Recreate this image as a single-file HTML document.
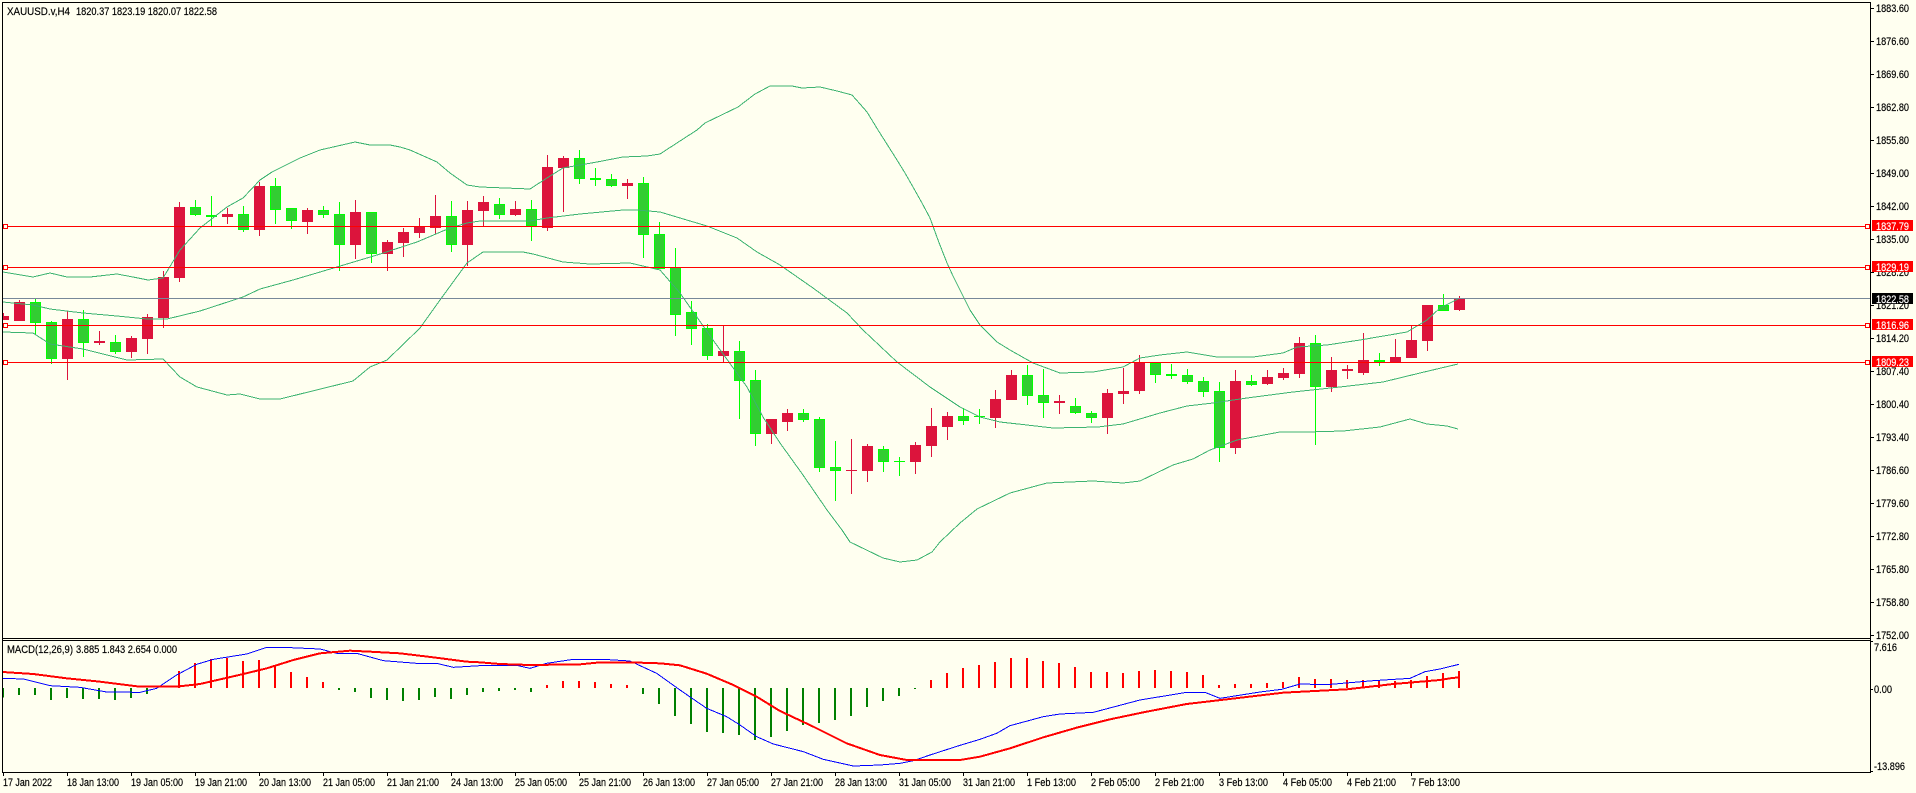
<!DOCTYPE html>
<html><head><meta charset="utf-8"><title>XAUUSD.v,H4</title>
<style>
html,body{margin:0;padding:0;background:#fffff0;width:1916px;height:793px;overflow:hidden}
svg{display:block;position:absolute;left:0;top:0}
text{font-family:"Liberation Sans",sans-serif;font-size:11px;fill:#000;stroke:#000;stroke-width:.18px}
.f text{fill:#fff;stroke:#fff}
.w{fill:none;stroke-width:3}
.b{fill:none;stroke-width:33}
.i{fill:none;stroke-width:27;stroke:#32cd32}
.r{stroke:#dc143c}
.g{stroke:#00ff00}
</style></head><body>
<svg width="1916" height="793" viewBox="0 0 1916 793" xmlns="http://www.w3.org/2000/svg" shape-rendering="crispEdges">
<rect width="1916" height="793" fill="#fffff0"/>

<!-- candles A -->
<g transform="translate(0 150) scale(.3333333)">
<path class="w r" d="M10.5 489V510M58.5 450V513M202.5 483V690M298.5 543V585M394.5 558V624M442.5 492V612M490.5 363V534M538.5 156V396M682.5 174V222M778.5 96V258M922.5 174V252M1066.5 150V327M1162.5 270V363M1210.5 234V321M1258.5 204V264M1306.5 135V252M1402.5 153V348"/>
<path class="b r" d="M10.5 498V510M58.5 456V513M202.5 507V627M298.5 573V579M394.5 564V606M442.5 501V567M490.5 381V504M538.5 171V384M682.5 192V201M778.5 108V240M922.5 180V216M1066.5 186V285M1162.5 276V312M1210.5 246V279M1258.5 228V249M1306.5 198V234M1402.5 180V285"/>
<path class="w g" d="M106.5 447V555M154.5 513V642M250.5 480V621M346.5 555V612M586.5 150V198M634.5 138V228M730.5 168V246M826.5 84V222M874.5 174V237M970.5 168V204M1018.5 156V363M1114.5 186V339M1354.5 153V306"/>
<path class="b g" d="M106.5 456V519M154.5 516V627M250.5 507V579M346.5 576V606M586.5 171V195M634.5 195V201M730.5 192V240M826.5 108V180M874.5 174V213M970.5 180V195M1018.5 192V285M1114.5 186V312M1354.5 198V285"/>
<path class="i" d="M106.5 459V516M154.5 519V624M250.5 510V576M346.5 579V603M586.5 174V192M730.5 195V237M826.5 111V177M874.5 177V210M970.5 183V192M1018.5 195V282M1114.5 189V309M1354.5 201V282"/>
</g>
<!-- candles B -->
<g transform="translate(480 130) scale(.3333333)">
<path class="w r" d="M10.5 198V288M106.5 213V258M202.5 75V303M250.5 78V246M442.5 147V207M730.5 585V696M874.5 867V942M922.5 837V903M1114.5 927V1092M1162.5 942V1056M1306.5 936V1032M1354.5 834V981M1402.5 846V930"/>
<path class="b r" d="M10.5 216V243M106.5 237V255M202.5 111V294M250.5 84V114M442.5 159V168M730.5 663V678M874.5 867V912M922.5 849V876M1114.5 1020V1023M1162.5 948V1023M1306.5 945V996M1354.5 888V948M1402.5 858V891"/>
<path class="w g" d="M58.5 204V267M154.5 210V333M298.5 60V162M346.5 114V168M394.5 132V171M490.5 141V384M538.5 276V417M586.5 354V618M634.5 513V645M682.5 582V690M778.5 633V867M826.5 720V948M970.5 837V876M1018.5 861V1026M1066.5 933V1113M1210.5 948V1026M1258.5 981V1038"/>
<path class="b g" d="M58.5 222V255M154.5 237V288M298.5 84V147M346.5 144V150M394.5 147V168M490.5 159V315M538.5 312V417M586.5 411V555M634.5 546V597M682.5 594V678M778.5 663V753M826.5 750V912M970.5 849V870M1018.5 867V1014M1066.5 1011V1023M1210.5 957V996M1258.5 993V996"/>
<path class="i" d="M58.5 225V252M154.5 240V285M298.5 87V144M394.5 150V165M490.5 162V312M538.5 315V414M586.5 414V552M634.5 549V594M682.5 597V675M778.5 666V750M826.5 753V909M970.5 852V867M1018.5 870V1011M1066.5 1014V1020M1210.5 960V993"/>
</g>
<!-- candles C -->
<g transform="translate(960 270) scale(.3333333)">
<path class="w r" d="M106.5 360V474M154.5 300V390M298.5 375V432M442.5 357V492M490.5 294V402M538.5 255V372M826.5 300V552M922.5 300V345M970.5 294V330M1018.5 201V324M1114.5 261V366M1162.5 285V327M1210.5 189V315M1306.5 207V276M1354.5 165V264M1402.5 105V243M1498.5 78V123"/>
<path class="b r" d="M106.5 387V444M154.5 315V390M298.5 393V399M442.5 369V444M490.5 363V372M538.5 276V363M826.5 333V534M922.5 321V342M970.5 309V324M1018.5 219V312M1114.5 300V351M1162.5 297V303M1210.5 270V309M1306.5 261V276M1354.5 210V264M1402.5 105V213M1498.5 84V120"/>
<path class="w g" d="M10.5 414V465M58.5 417V462M202.5 285V405M250.5 297V444M346.5 384V432M394.5 423V459M586.5 276V339M634.5 282V327M682.5 297V342M730.5 321V381M778.5 336V576M874.5 315V348M1066.5 195V525M1258.5 249V288M1450.5 72V123"/>
<path class="b g" d="M10.5 438V453M58.5 438V441M202.5 315V378M250.5 375V399M346.5 408V429M394.5 429V444M586.5 279V315M634.5 312V318M682.5 315V336M730.5 333V366M778.5 363V534M874.5 333V345M1066.5 219V351M1258.5 270V276M1450.5 105V123"/>
<path class="i" d="M10.5 441V450M202.5 318V375M250.5 378V396M346.5 411V426M394.5 432V441M586.5 282V312M682.5 318V333M730.5 336V363M778.5 366V531M874.5 336V342M1066.5 222V348M1450.5 108V120"/>
</g>

<!-- bollinger -->
<g fill="none" stroke="#3cb371" stroke-width="1">
<polyline points="3,272 33,277 50,273 67,277 90,277 117,274 133,277 148,280 163,278 180,250 200,228 227,207 243,198 260,180 272,172 300,158 320,150 355,142 370,145 390,145 400,147 410,150 437,162 450,173 467,185 480,187 530,189 547,178 563,168 597,162 623,157 647,156 660,154 680,141 697,130 705,123 738,107 755,94 770,86 792,86 802,88 820,87 837,91 852,95 860,104 867,112 878,130 897,160 905,173 913,187 922,203 930,218 938,240 947,263 953,276 960,290 970,310 980,325 997,342 1010,350 1033,363 1060,373 1093,372 1123,367 1140,358 1160,355 1187,352 1217,357 1253,357 1283,353 1297,347 1327,345 1360,340 1407,332 1427,320 1440,308 1458,299"/>
<polyline points="3,302 33,305 50,309 83,313 117,316 147,319 167,319 200,311 243,297 260,289 293,280 337,267 377,255 417,242 450,228 467,223 480,221 530,221 547,218 580,214 623,210 637,210 660,212 680,218 707,226 737,238 757,252 780,265 813,288 847,313 863,330 897,362 930,387 960,407 980,417 1000,422 1027,425 1053,428 1098,427 1123,424 1160,413 1187,406 1213,403 1247,398 1293,392 1340,387 1383,382 1420,373 1458,364"/>
<polyline points="3,332 33,333 50,344 83,349 127,360 163,359 180,377 197,387 227,395 240,394 260,399 280,399 353,381 370,367 387,360 420,328 440,300 467,263 483,252 523,252 533,254 563,262 590,264 630,263 660,270 680,293 713,340 747,387 763,417 780,443 803,475 827,510 842,530 850,542 883,558 900,562 917,560 932,552 940,542 960,523 977,509 1010,493 1047,483 1093,481 1123,483 1140,481 1173,465 1193,459 1210,450 1237,440 1280,432 1307,432 1343,431 1380,427 1410,419 1427,424 1447,426 1458,429"/>
</g>

<!-- horizontal lines -->
<rect x="3" y="298" width="1867" height="1" fill="#778899"/>
<g fill="#ff0000">
<rect x="3" y="226" width="1867" height="1"/>
<rect x="3" y="267" width="1867" height="1"/>
<rect x="3" y="325" width="1867" height="1"/>
<rect x="3" y="362" width="1867" height="1"/>
</g>
<g fill="#fffff0" stroke="#ff0000" stroke-width="1">
<rect x="3.5" y="224.5" width="4" height="4"/><rect x="3.5" y="265.5" width="4" height="4"/><rect x="3.5" y="323.5" width="4" height="4"/><rect x="3.5" y="360.5" width="4" height="4"/>
<rect x="1865.5" y="224.5" width="4" height="4"/><rect x="1865.5" y="265.5" width="4" height="4"/><rect x="1865.5" y="323.5" width="4" height="4"/><rect x="1865.5" y="360.5" width="4" height="4"/>
</g>

<!-- MACD histogram + lines -->
<g fill="none" stroke-width="6">
<g transform="translate(0 630) scale(.3333333)">
<path stroke="#008000" d="M9 174V203M57 174V195M105 174V195M153 174V210M201 174V204M249 174V207M297 174V207M345 174V210M393 174V204M441 174V192M1017 174V180M1065 174V186M1113 174V204M1161 174V210M1209 174V213M1257 174V210M1305 174V201M1353 174V207M1401 174V195"/>
<path stroke="#ff0000" d="M537 174V123M585 174V99M633 174V87M681 174V84M729 174V93M777 174V90M825 174V105M873 174V126M921 174V141M969 174V156"/>
</g>
<g transform="translate(480 630) scale(.3333333)">
<path stroke="#008000" d="M9 174V186M57 174V183M105 174V180M153 174V186M489 174V192M537 174V222M585 174V258M633 174V282M681 174V306M729 174V309M777 174V315M825 174V330M873 174V321M921 174V303M969 174V285M1017 174V279M1065 174V270M1113 174V258M1161 174V231M1209 174V213M1257 174V198M1305 174V177"/>
<path stroke="#ff0000" d="M201 174V165M249 174V153M297 174V153M345 174V156M393 174V162M441 174V165M1353 174V150M1401 174V129"/>
</g>
<g transform="translate(960 630) scale(.3333333)">
<path stroke="#ff0000" d="M9 174V114M57 174V105M105 174V96M153 174V84M201 174V84M249 174V93M297 174V99M345 174V111M393 174V126M441 174V126M489 174V129M537 174V123M585 174V120M633 174V123M681 174V126M729 174V135M777 174V165M825 174V162M873 174V162M921 174V159M969 174V156M1017 174V141M1065 174V147M1113 174V147M1161 174V150M1209 174V150M1257 174V153M1305 174V153M1353 174V150M1401 174V138M1449 174V129M1497 174V123"/>
</g>
</g>
<g fill="none" stroke="#0000ff" stroke-width="3">
<polyline transform="translate(0 630) scale(.3333333)" points="8,145 70,147 150,167 240,172 320,186 420,187 470,175 530,135 590,103 640,88 740,72 800,52 850,52 960,57 1010,70 1070,70 1150,92 1250,100 1310,100 1360,112 1440,107"/>
<polyline transform="translate(480 630) scale(.3333333)" points="0,107 110,106 150,115 200,100 280,88 370,88 450,93 530,130 600,180 680,235 740,260 780,285 830,320 880,342 970,365 1030,388 1120,408 1200,405 1260,400 1300,392 1350,375 1440,346"/>
<polyline transform="translate(960 630) scale(.3333333)" points="0,346 60,328 110,310 150,287 250,260 300,252 400,247 540,210 680,187 735,187 780,205 900,186 965,178 1020,162 1100,164 1240,152 1350,145 1395,125 1440,117"/>
<polyline transform="translate(1440 630) scale(.3333333)" points="0,117 57,103"/>
</g>
<g fill="none" stroke="#ff0000" stroke-width="6">
<polyline transform="translate(0 630) scale(.3333333)" points="8,126 100,132 200,145 300,155 420,170 530,170 600,162 730,132 800,115 880,90 960,70 1050,62 1110,65 1200,70 1300,82 1400,95 1440,97"/>
<polyline transform="translate(480 630) scale(.3333333)" points="0,97 60,102 150,105 300,103 350,98 450,97 540,100 600,106 680,131 760,165 830,200 900,243 1000,290 1100,340 1200,375 1280,390 1440,390"/>
<polyline transform="translate(960 630) scale(.3333333)" points="0,390 60,380 150,355 250,322 350,293 450,268 550,247 680,222 800,208 970,188 1160,178 1300,162 1440,150"/>
<polyline transform="translate(1440 630) scale(.3333333)" points="0,150 30,145 57,142"/>
</g>

<!-- margin + frame -->
<rect x="0" y="0" width="2" height="793" fill="#fffff0"/>
<g fill="#000">
<rect x="2" y="2" width="1869" height="1"/>
<rect x="2" y="2" width="1" height="771"/>
<rect x="1870" y="2" width="1" height="771"/>
<rect x="2" y="638" width="1869" height="1"/>
<rect x="2" y="640" width="1869" height="1"/>
<rect x="2" y="772" width="1869" height="1"/>
<!-- right ticks -->
<path d="M1871 8h3v1h-3zM1871 41h3v1h-3zM1871 74h3v1h-3zM1871 107h3v1h-3zM1871 140h3v1h-3zM1871 173h3v1h-3zM1871 206h3v1h-3zM1871 239h3v1h-3zM1871 272h3v1h-3zM1871 305h3v1h-3zM1871 338h3v1h-3zM1871 371h3v1h-3zM1871 404h3v1h-3zM1871 437h3v1h-3zM1871 470h3v1h-3zM1871 503h3v1h-3zM1871 536h3v1h-3zM1871 569h3v1h-3zM1871 602h3v1h-3zM1871 635h3v1h-3zM1871 641h2v1h-2zM1871 689h2v1h-2zM1871 771h2v1h-2z"/>
<!-- bottom ticks -->
<path d="M3 773h1v3h-1zM67 773h1v3h-1zM131 773h1v3h-1zM195 773h1v3h-1zM259 773h1v3h-1zM323 773h1v3h-1zM387 773h1v3h-1zM451 773h1v3h-1zM515 773h1v3h-1zM579 773h1v3h-1zM643 773h1v3h-1zM707 773h1v3h-1zM771 773h1v3h-1zM835 773h1v3h-1zM899 773h1v3h-1zM963 773h1v3h-1zM1027 773h1v3h-1zM1091 773h1v3h-1zM1155 773h1v3h-1zM1219 773h1v3h-1zM1283 773h1v3h-1zM1347 773h1v3h-1zM1411 773h1v3h-1z"/>
</g>

<g>
<text x="7" y="15" textLength="63" lengthAdjust="spacingAndGlyphs">XAUUSD.v,H4</text>
<text x="76" y="15" textLength="141" lengthAdjust="spacingAndGlyphs">1820.37 1823.19 1820.07 1822.58</text>
<text x="7" y="653" textLength="66" lengthAdjust="spacingAndGlyphs">MACD(12,26,9)</text>
<text x="76" y="653" textLength="101" lengthAdjust="spacingAndGlyphs">3.885 1.843 2.654 0.000</text>

<text x="1876" y="12" textLength="33" lengthAdjust="spacingAndGlyphs">1883.60</text>
<text x="1876" y="45" textLength="33" lengthAdjust="spacingAndGlyphs">1876.60</text>
<text x="1876" y="78" textLength="33" lengthAdjust="spacingAndGlyphs">1869.60</text>
<text x="1876" y="111" textLength="33" lengthAdjust="spacingAndGlyphs">1862.80</text>
<text x="1876" y="144" textLength="33" lengthAdjust="spacingAndGlyphs">1855.80</text>
<text x="1876" y="177" textLength="33" lengthAdjust="spacingAndGlyphs">1849.00</text>
<text x="1876" y="210" textLength="33" lengthAdjust="spacingAndGlyphs">1842.00</text>
<text x="1876" y="243" textLength="33" lengthAdjust="spacingAndGlyphs">1835.00</text>
<text x="1876" y="276" textLength="33" lengthAdjust="spacingAndGlyphs">1828.20</text>
<text x="1876" y="309" textLength="33" lengthAdjust="spacingAndGlyphs">1821.20</text>
<text x="1876" y="342" textLength="33" lengthAdjust="spacingAndGlyphs">1814.20</text>
<text x="1876" y="375" textLength="33" lengthAdjust="spacingAndGlyphs">1807.40</text>
<text x="1876" y="408" textLength="33" lengthAdjust="spacingAndGlyphs">1800.40</text>
<text x="1876" y="441" textLength="33" lengthAdjust="spacingAndGlyphs">1793.40</text>
<text x="1876" y="474" textLength="33" lengthAdjust="spacingAndGlyphs">1786.60</text>
<text x="1876" y="507" textLength="33" lengthAdjust="spacingAndGlyphs">1779.60</text>
<text x="1876" y="540" textLength="33" lengthAdjust="spacingAndGlyphs">1772.80</text>
<text x="1876" y="573" textLength="33" lengthAdjust="spacingAndGlyphs">1765.80</text>
<text x="1876" y="606" textLength="33" lengthAdjust="spacingAndGlyphs">1758.80</text>
<text x="1876" y="639" textLength="33" lengthAdjust="spacingAndGlyphs">1752.00</text>

<text x="1874" y="651" textLength="23" lengthAdjust="spacingAndGlyphs">7.616</text>
<text x="1874" y="693" textLength="18" lengthAdjust="spacingAndGlyphs">0.00</text>
<text x="1874" y="770" textLength="31" lengthAdjust="spacingAndGlyphs">-13.896</text>

<text x="3" y="786" textLength="49" lengthAdjust="spacingAndGlyphs">17 Jan 2022</text>
<text x="67" y="786" textLength="52" lengthAdjust="spacingAndGlyphs">18 Jan 13:00</text>
<text x="131" y="786" textLength="52" lengthAdjust="spacingAndGlyphs">19 Jan 05:00</text>
<text x="195" y="786" textLength="52" lengthAdjust="spacingAndGlyphs">19 Jan 21:00</text>
<text x="259" y="786" textLength="52" lengthAdjust="spacingAndGlyphs">20 Jan 13:00</text>
<text x="323" y="786" textLength="52" lengthAdjust="spacingAndGlyphs">21 Jan 05:00</text>
<text x="387" y="786" textLength="52" lengthAdjust="spacingAndGlyphs">21 Jan 21:00</text>
<text x="451" y="786" textLength="52" lengthAdjust="spacingAndGlyphs">24 Jan 13:00</text>
<text x="515" y="786" textLength="52" lengthAdjust="spacingAndGlyphs">25 Jan 05:00</text>
<text x="579" y="786" textLength="52" lengthAdjust="spacingAndGlyphs">25 Jan 21:00</text>
<text x="643" y="786" textLength="52" lengthAdjust="spacingAndGlyphs">26 Jan 13:00</text>
<text x="707" y="786" textLength="52" lengthAdjust="spacingAndGlyphs">27 Jan 05:00</text>
<text x="771" y="786" textLength="52" lengthAdjust="spacingAndGlyphs">27 Jan 21:00</text>
<text x="835" y="786" textLength="52" lengthAdjust="spacingAndGlyphs">28 Jan 13:00</text>
<text x="899" y="786" textLength="52" lengthAdjust="spacingAndGlyphs">31 Jan 05:00</text>
<text x="963" y="786" textLength="52" lengthAdjust="spacingAndGlyphs">31 Jan 21:00</text>
<text x="1027" y="786" textLength="49" lengthAdjust="spacingAndGlyphs">1 Feb 13:00</text>
<text x="1091" y="786" textLength="49" lengthAdjust="spacingAndGlyphs">2 Feb 05:00</text>
<text x="1155" y="786" textLength="49" lengthAdjust="spacingAndGlyphs">2 Feb 21:00</text>
<text x="1219" y="786" textLength="49" lengthAdjust="spacingAndGlyphs">3 Feb 13:00</text>
<text x="1283" y="786" textLength="49" lengthAdjust="spacingAndGlyphs">4 Feb 05:00</text>
<text x="1347" y="786" textLength="49" lengthAdjust="spacingAndGlyphs">4 Feb 21:00</text>
<text x="1411" y="786" textLength="49" lengthAdjust="spacingAndGlyphs">7 Feb 13:00</text>
</g>

<!-- price flags -->
<g class="f">
<rect x="1872" y="220" width="41" height="11" fill="#ff0000"/>
<rect x="1872" y="261" width="41" height="11" fill="#ff0000"/>
<rect x="1872" y="293" width="41" height="11" fill="#000"/>
<rect x="1872" y="319" width="41" height="11" fill="#ff0000"/>
<rect x="1872" y="356" width="41" height="11" fill="#ff0000"/>
<text x="1876" y="230" textLength="33" lengthAdjust="spacingAndGlyphs">1837.79</text>
<text x="1876" y="271" textLength="33" lengthAdjust="spacingAndGlyphs">1829.19</text>
<text x="1876" y="303" textLength="33" lengthAdjust="spacingAndGlyphs">1822.58</text>
<text x="1876" y="329" textLength="33" lengthAdjust="spacingAndGlyphs">1816.96</text>
<text x="1876" y="366" textLength="33" lengthAdjust="spacingAndGlyphs">1809.23</text>
</g>
</svg>
</body></html>
